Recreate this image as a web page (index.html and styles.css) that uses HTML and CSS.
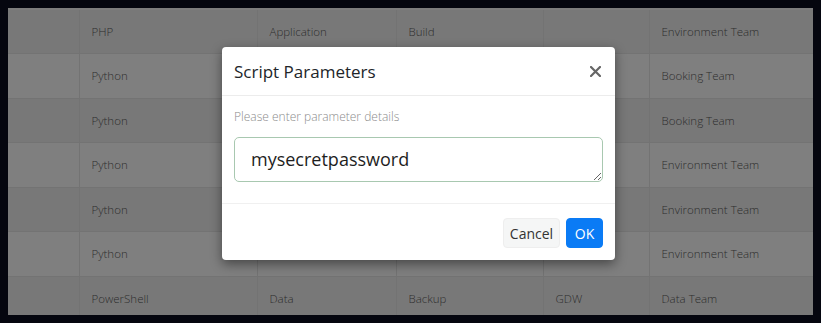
FILE: index.html
```html
<!DOCTYPE html>
<html lang="en">
<head>
    <meta charset="UTF-8">
    <title>Scripts</title>
    <link rel="stylesheet" href="styles.css">
</head>
<body>
    <div class="page">
        <table class="scripts">
            <colgroup>
                <col class="c-sel"><col class="c-lang"><col class="c-type"><col class="c-task"><col class="c-site"><col class="c-team">
            </colgroup>
            <tbody>
                <tr><td></td><td>PHP</td><td>Application</td><td>Build</td><td></td><td>Environment Team</td></tr>
                <tr><td></td><td>Python</td><td></td><td></td><td></td><td>Booking Team</td></tr>
                <tr><td></td><td>Python</td><td></td><td></td><td></td><td>Booking Team</td></tr>
                <tr><td></td><td>Python</td><td></td><td></td><td></td><td>Environment Team</td></tr>
                <tr><td></td><td>Python</td><td></td><td></td><td></td><td>Environment Team</td></tr>
                <tr><td></td><td>Python</td><td></td><td></td><td></td><td>Environment Team</td></tr>
                <tr><td></td><td>PowerShell</td><td>Data</td><td>Backup</td><td>GDW</td><td>Data Team</td></tr>
            </tbody>
        </table>

        <div class="backdrop"></div>

        <div class="modal">
            <div class="modal-header">
                <h5>Script Parameters</h5>
                <button class="close" aria-label="Close">
                    <svg width="11" height="11" viewBox="0 0 11 11">
                        <path d="M1 1 L10 10 M10 1 L1 10" stroke="#666" stroke-width="2.2" stroke-linecap="round"/>
                    </svg>
                </button>
            </div>
            <div class="modal-body">
                <p>Please enter parameter details</p>
                <textarea>mysecretpassword</textarea>
            </div>
            <div class="modal-footer">
                <button class="btn btn-light">Cancel</button>
                <button class="btn btn-primary">OK</button>
            </div>
        </div>
    </div>
</body>
</html>
```

FILE: styles.css
```css
* {
    box-sizing: border-box;
}

body {
    margin: 8px;
    background: #05060f;
    font-family: 'Open Sans', 'Liberation Sans', sans-serif;
}

.page {
    position: relative;
    height: 307px;
    overflow: hidden;
    background: #ffffff;
}

.scripts {
    width: 100%;
    border-collapse: collapse;
    table-layout: fixed;
    font-size: 11.5px;
    font-weight: 300;
    color: #5c5c5c;
}

.c-sel { width: 71px; }
.c-lang { width: 178px; }
.c-type { width: 139px; }
.c-task { width: 147px; }
.c-site { width: 106px; }

.scripts tr {
    height: 44.5px;
}

.scripts tr:nth-child(odd) {
    background: #f1f1f1;
}

.scripts td {
    padding: 0 12px;
    border-top: 1px solid #e6e6e6;
    border-left: 1px solid #e6e6e6;
    white-space: nowrap;
}

.scripts tr:first-child td {
    border-top: 2px solid #fbfbfb;
}

.scripts td:first-child {
    border-left: none;
}

.backdrop {
    position: absolute;
    inset: 0;
    background: rgba(0, 0, 0, 0.5);
}

.modal {
    position: absolute;
    left: 214px;
    top: 39px;
    width: 393px;
    background: #fff;
    border-radius: 4px;
    box-shadow: 0 4px 12px rgba(0, 0, 0, 0.45);
}

.modal-header {
    height: 49px;
    display: flex;
    align-items: center;
    justify-content: space-between;
    padding: 0 14px 0 12px;
    border-bottom: 1px solid #ececec;
}

.modal-header h5 {
    margin: 0;
    font-size: 17px;
    font-weight: 400;
    color: #212529;
}

.close {
    border: none;
    background: none;
    padding: 0;
    width: 11px;
    height: 11px;
    display: flex;
}

.modal-body {
    padding: 13px 12px 21px;
    border-bottom: 1px solid #f0f0f0;
}

.modal-body p {
    margin: 0 0 12px;
    font-size: 12px;
    line-height: 16px;
    font-weight: 300;
    color: #8c8c8c;
}

.modal-body textarea {
    display: block;
    width: 100%;
    height: 45px;
    padding: 9px 16px;
    border: 1px solid #a8c8b0;
    border-radius: 5px;
    font-family: 'Open Sans', 'Liberation Sans', sans-serif;
    font-size: 18px;
    line-height: 24px;
    color: #1e1e1e;
    resize: vertical;
    outline: none;
}

.modal-footer {
    display: flex;
    justify-content: flex-end;
    gap: 6px;
    padding: 14px 12px 12px;
}

.btn {
    height: 30px;
    border-radius: 4px;
    font-family: 'Open Sans', 'Liberation Sans', sans-serif;
    font-size: 14px;
    padding: 0;
    cursor: pointer;
}

.btn-light {
    width: 57px;
    background: #f5f6f6;
    border: 1px solid #eeeeee;
    color: #333;
}

.btn-primary {
    width: 37px;
    background: #0a7bf5;
    border: 1px solid #0a7bf5;
    color: #fff;
}
```
